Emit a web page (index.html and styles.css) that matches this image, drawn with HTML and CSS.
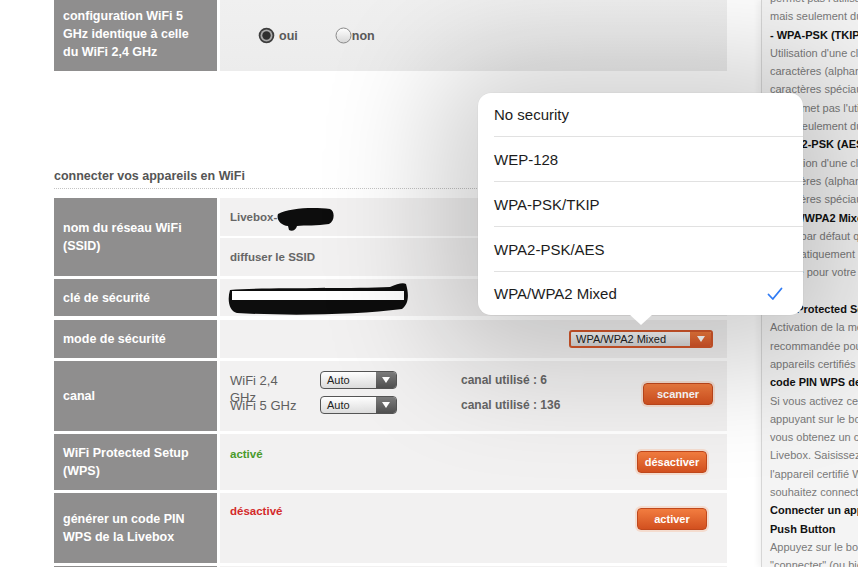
FILE: index.html
```html
<!DOCTYPE html>
<html lang="fr">
<head>
<meta charset="utf-8">
<title>Livebox WiFi</title>
<link rel="stylesheet" href="styles.css">
</head>
<body>
<div class="page">
  <main class="main">
    <div class="row row-top">
      <div class="label label-top">configuration WiFi 5 GHz identique à celle du WiFi 2,4 GHz</div>
      <div class="value value-radios">
        <span class="radio-item">
          <svg class="radio" width="17" height="17" viewBox="0 0 17 17"><circle cx="8.5" cy="8.5" r="7.8" fill="#3d3d3d"/><circle cx="8.5" cy="8.5" r="6" fill="#a9a9a9"/><circle cx="8.5" cy="8.5" r="4.2" fill="#2e2e2e"/></svg>
          <span class="radio-text">oui</span>
        </span>
        <span class="radio-item">
          <svg class="radio" width="17" height="17" viewBox="0 0 17 17"><defs><linearGradient id="rg" x1="0" y1="0" x2="0" y2="1"><stop offset="0" stop-color="#ffffff"/><stop offset="1" stop-color="#d6d6d6"/></linearGradient></defs><circle cx="8.5" cy="8.5" r="7.5" fill="url(#rg)" stroke="#8a8a8a" stroke-width="1"/></svg>
          <span class="radio-text radio-text-tight">non</span>
        </span>
      </div>
    </div>

    <h2 class="section-title">connecter vos appareils en WiFi</h2>

    <div class="row row-ssid">
      <div class="label">nom du réseau WiFi (SSID)</div>
      <div class="value-stack">
        <div class="value sub">
          <span class="vtext">Livebox-</span>
          <svg class="blob-ssid" width="58" height="26" viewBox="0 0 58 26"><path d="M1 8 C 12 2, 36 1, 53 3 C 58 5, 58 15, 52 18 C 40 20, 28 19, 20 20 C 19 24, 15 26, 12 24 L 11 20 C 4 19, -1 14, 1 8 Z" fill="#0d0d0d"/></svg>
        </div>
        <div class="value sub"><span class="vtext">diffuser le SSID</span></div>
      </div>
    </div>

    <div class="row row-key">
      <div class="label">clé de sécurité</div>
      <div class="value value-key">
        <svg class="blob-key" width="182" height="34" viewBox="0 0 182 34"><path d="M3 8 C 40 5, 120 7, 163 5 C 170 2, 176 0, 179 2 C 182 12, 182 22, 175 27 C 130 33, 60 34, 10 31 C 2 29, 0 18, 3 8 Z" fill="#0d0d0d"/><rect x="5" y="9" width="172" height="9" fill="#fff"/></svg>
      </div>
    </div>

    <div class="row row-mode">
      <div class="label">mode de sécurité</div>
      <div class="value value-mode">
        <div class="select select-mode"><span class="select-text">WPA/WPA2 Mixed</span><span class="select-arrow"></span></div>
      </div>
    </div>

    <div class="row row-canal">
      <div class="label">canal</div>
      <div class="value value-canal">
        <div class="canal-grid">
          <span class="band">WiFi 2,4 GHz</span>
          <div class="select select-canal"><span class="select-text">Auto</span><span class="select-arrow"></span></div>
          <span class="used">canal utilisé : 6</span>
          <span class="band">WiFi 5 GHz</span>
          <div class="select select-canal"><span class="select-text">Auto</span><span class="select-arrow"></span></div>
          <span class="used">canal utilisé : 136</span>
        </div>
        <div class="btn btn-scan">scanner</div>
      </div>
    </div>

    <div class="row row-wps">
      <div class="label">WiFi Protected Setup (WPS)</div>
      <div class="value value-action value-wps">
        <span class="status on">activé</span>
        <div class="btn">désactiver</div>
      </div>
    </div>

    <div class="row row-pin">
      <div class="label">générer un code PIN WPS de la Livebox</div>
      <div class="value value-action value-pin">
        <span class="status off">désactivé</span>
        <div class="btn">activer</div>
      </div>
    </div>

    <div class="row row-last">
      <div class="label"></div>
      <div class="value"></div>
    </div>
  </main>

  <aside class="help">
    <div class="help-text">
      <p>permet pas l'utilisation de la norme</p>
      <p>mais seulement du 802.11b/g.</p>
      <p class="b">- WPA-PSK (TKIP) :</p>
      <p>Utilisation d'une clé de 8 à 63</p>
      <p>caractères (alphanumériques et</p>
      <p>caractères spéciaux). Ce mode ne</p>
      <p>ne permet pas l'utilisation de la</p>
      <p>mais seulement du 802.11b/g.</p>
      <p class="b">- WPA2-PSK (AES) :</p>
      <p>Utilisation d'une clé de 8 à 63</p>
      <p>caractères (alphanumériques et</p>
      <p>caractères spéciaux).</p>
      <p class="b">- WPA/WPA2 Mixed :</p>
      <p>mode par défaut qui sélectionne</p>
      <p>automatiquement le mode le plus</p>
      <p>adapté pour votre appareil.</p>
      <p>&nbsp;</p>
      <p class="b">WiFi Protected Setup (WPS)</p>
      <p>Activation de la méthode WPS</p>
      <p>recommandée pour connecter des</p>
      <p>appareils certifiés WPS.</p>
      <p class="b">code PIN WPS de la Livebox</p>
      <p>Si vous activez cette option en</p>
      <p>appuyant sur le bouton activer,</p>
      <p>vous obtenez un code PIN de la</p>
      <p>Livebox. Saisissez ce code sur</p>
      <p>l'appareil certifié WPS que vous</p>
      <p>souhaitez connecter.</p>
      <p class="b">Connecter un appareil WPS</p>
      <p class="b">Push Button</p>
      <p>Appuyez sur le bouton</p>
      <p>"connecter" (ou bien sur le bouton</p>
    </div>
  </aside>
</div>

<div class="popover">
  <div class="opt opt-first">No security</div>
  <div class="opt">WEP-128</div>
  <div class="opt">WPA-PSK/TKIP</div>
  <div class="opt">WPA2-PSK/AES</div>
  <div class="opt opt-last">WPA/WPA2 Mixed
    <svg class="check" width="16" height="14" viewBox="0 0 16 14"><path d="M1.5 7.5 L5.8 12 L14.5 1.5" fill="none" stroke="#2f7bf5" stroke-width="1.8" stroke-linecap="round" stroke-linejoin="round"/></svg>
  </div>
</div>
</body>
</html>
```

FILE: styles.css
```css
html, body {
  margin: 0;
  padding: 0;
}
body {
  width: 858px;
  height: 567px;
  overflow: hidden;
  position: relative;
  background: #ffffff;
  font-family: "Liberation Sans", Arial, Helvetica, sans-serif;
}
.page {
  display: flex;
  height: 567px;
  overflow: hidden;
}
.main {
  flex: none;
  width: 673px;
  margin-left: 54px;
}
.row {
  display: flex;
  gap: 3px;
  margin-bottom: 3px;
}
.label {
  flex: none;
  width: 138px;
  padding-left: 9px;
  padding-right: 16px;
  background: #8f8e8e;
  color: #ffffff;
  font-weight: bold;
  font-size: 12.5px;
  line-height: 18px;
  display: flex;
  align-items: center;
}
.label-top {
  align-items: flex-start;
  padding-top: 7px;
  box-sizing: border-box;
  width: 163px;
}
.value {
  flex: 1;
  background: #f2f1f1;
  box-sizing: border-box;
}
.row-top {
  height: 71px;
  margin-bottom: 0;
}
.value-radios {
  display: flex;
  align-items: center;
  padding-left: 38px;
  gap: 37px;
  background: linear-gradient(#f0f0f0, #ececec);
}
.radio-item {
  display: flex;
  align-items: center;
}
.radio {
  display: block;
}
.radio-text {
  margin-left: 4px;
  font-size: 12.5px;
  font-weight: bold;
  color: #5a5a5a;
}
.radio-text-tight {
  margin-left: 0;
}
.section-title {
  margin: 98px 0 9px 0;
  padding-bottom: 5px;
  border-bottom: 1px dotted #c4c4c4;
  font-size: 12.5px;
  line-height: 14px;
  font-weight: bold;
  color: #555555;
}
.row-ssid {
  height: 78px;
}
.value-stack {
  flex: 1;
  display: flex;
  flex-direction: column;
  gap: 2px;
}
.sub {
  flex: 1;
  display: flex;
  align-items: center;
  padding-left: 10px;
}
.vtext {
  font-size: 11.5px;
  font-weight: bold;
  color: #666666;
}
.blob-ssid {
  display: block;
  margin-top: 4px;
}
.row-key {
  height: 37px;
  margin-bottom: 4px;
}
.value-key {
  display: flex;
  align-items: center;
  padding-left: 7px;
}
.blob-key {
  display: block;
  margin-top: 3px;
}
.row-mode {
  height: 38px;
}
.value-mode {
  display: flex;
  align-items: center;
  justify-content: flex-end;
  padding-right: 14px;
}
.select {
  display: flex;
  box-sizing: border-box;
  overflow: hidden;
}
.select-text {
  flex: 1;
  font-size: 11px;
  color: #222222;
  display: flex;
  align-items: center;
}
.select-arrow {
  display: flex;
  align-items: center;
  justify-content: center;
}
.select-arrow::after {
  content: "";
  width: 0;
  height: 0;
  border-left: 4px solid transparent;
  border-right: 4px solid transparent;
  border-top: 6px solid #ffffff;
}
.select-mode {
  width: 144px;
  height: 18px;
  border: 2px solid #d4572a;
  border-radius: 3px;
  background: linear-gradient(#fbfbfb, #d7d7d7);
}
.select-mode .select-text {
  padding-left: 5px;
}
.select-mode .select-arrow {
  width: 21px;
  background: linear-gradient(#f07a3c, #d6552a);
}
.select-canal {
  width: 77px;
  height: 18px;
  border: 1px solid #555555;
  border-radius: 4px;
  background: linear-gradient(#ffffff, #dcdcdc);
}
.select-canal .select-text {
  padding-left: 6px;
}
.select-canal .select-arrow {
  width: 20px;
  background: linear-gradient(#7d7d7d, #505050);
}
.row-canal {
  height: 70px;
}
.value-canal {
  display: flex;
  align-items: flex-start;
  padding: 10px 14px 0 10px;
}
.canal-grid {
  display: grid;
  grid-template-columns: 90px 77px auto;
  grid-auto-rows: 18px;
  row-gap: 7px;
  align-items: center;
}
.band {
  align-self: start;
  width: 70px;
  padding-top: 1px;
  font-size: 13px;
  line-height: 17px;
  color: #5f5f5f;
}
.used {
  margin-left: 64px;
  font-size: 12px;
  font-weight: bold;
  color: #666666;
}
.btn {
  flex: none;
  width: 70px;
  height: 22px;
  box-sizing: border-box;
  border: 1px solid #c0481c;
  border-radius: 4px;
  background: linear-gradient(#f27d40, #d2501f);
  box-shadow: 0 0 0 2px #f4dccf;
  color: #ffffff;
  font-size: 11px;
  font-weight: bold;
  line-height: 20px;
  text-align: center;
}
.btn-scan {
  margin-left: auto;
  margin-top: 12px;
}
.value-action {
  display: flex;
  align-items: flex-start;
  justify-content: space-between;
  padding: 0 20px 0 10px;
}
.row-wps {
  height: 56px;
}
.value-wps {
  padding-top: 13px;
}
.row-pin {
  height: 70px;
}
.value-pin {
  padding-top: 11px;
}
.value-action .btn {
  margin-top: 4px;
}
.status {
  font-size: 11.5px;
  font-weight: bold;
  line-height: 14px;
}
.status.on {
  color: #4a9a2b;
}
.status.off {
  color: #d42a2a;
}
.row-last {
  height: 1px;
  margin-bottom: 0;
}
.help {
  flex: 1;
  margin-left: 34px;
  background: #f4f4f4;
  border-left: 1px solid #d6d6d6;
  box-shadow: -3px 0 6px rgba(0, 0, 0, 0.05);
  overflow: hidden;
  padding-left: 8px;
}
.help-text {
  margin-top: -11px;
  font-size: 11px;
  line-height: 18.3px;
  color: #7a7a7a;
  white-space: nowrap;
}
.help-text p {
  margin: 0;
}
.help-text .b {
  font-weight: bold;
  color: #111111;
}
.popover {
  position: absolute;
  left: 478px;
  top: 93px;
  width: 325px;
  background: #ffffff;
  border-radius: 13px;
  box-shadow: 0 0 0 0.5px rgba(0, 0, 0, 0.04), 0 8px 120px 40px rgba(0, 0, 0, 0.2);
}
.popover::after {
  content: "";
  position: absolute;
  left: 151px;
  bottom: -10px;
  width: 0;
  height: 0;
  border-left: 12px solid transparent;
  border-right: 12px solid transparent;
  border-top: 11px solid #ffffff;
}
.opt {
  height: 45px;
  box-sizing: border-box;
  margin-left: 16px;
  padding-right: 20px;
  display: flex;
  align-items: center;
  justify-content: space-between;
  border-bottom: 1px solid #e1e1e1;
  font-size: 15px;
  color: #1c1c1c;
}
.opt-first {
  height: 44px;
}
.opt-last {
  height: 43px;
  border-bottom: none;
}
.check {
  display: block;
}
```
